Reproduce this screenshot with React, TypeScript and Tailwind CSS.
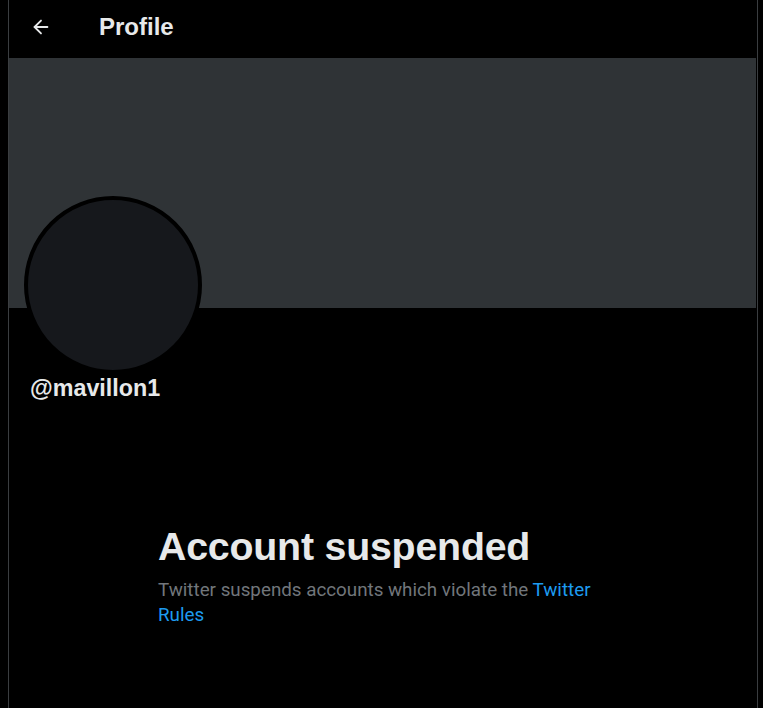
import { ArrowLeft } from "lucide-react";

export default function App() {
  return (
    <div className="min-h-[708px] bg-black font-['Liberation_Sans',Arial,sans-serif] text-[#e7e9ea]">
      <main className="ml-2 flex min-h-[708px] w-[750px] flex-col border-x border-[#3a3d40]">
        <header className="flex h-[58px] items-center pb-[4px]">
          <button className="ml-[14px] flex h-9 w-9 items-center justify-center text-[#e7e9ea]">
            <ArrowLeft size={22} strokeWidth={2} />
          </button>
          <h1 className="ml-[40px] text-[24px] font-bold leading-7">Profile</h1>
        </header>

        <div className="h-[250px] w-[747px] bg-[#2f3336]" />

        <div className="relative px-[15px]">
          <div className="-mt-[112px] h-[178px] w-[178px] rounded-full border-4 border-black bg-[#16181c]" />
          <p className="mt-[0px] pl-[6px] text-[23.3px] font-bold leading-7">@mavillon1</p>
        </div>

        <section className="mt-[122px] pl-[149px] pr-[150px]">
          <h2 className="text-[39.3px] font-extrabold leading-[44px] tracking-[-0.2px]">
            Account suspended
          </h2>
          <p className="mt-[10px] font-['Roboto',sans-serif] text-[18.8px] leading-[25px] text-[#71767b]">
            Twitter suspends accounts which violate the{" "}
            <a className="text-[#1d9bf0]" href="#">
              Twitter Rules
            </a>
          </p>
        </section>
      </main>
    </div>
  );
}
